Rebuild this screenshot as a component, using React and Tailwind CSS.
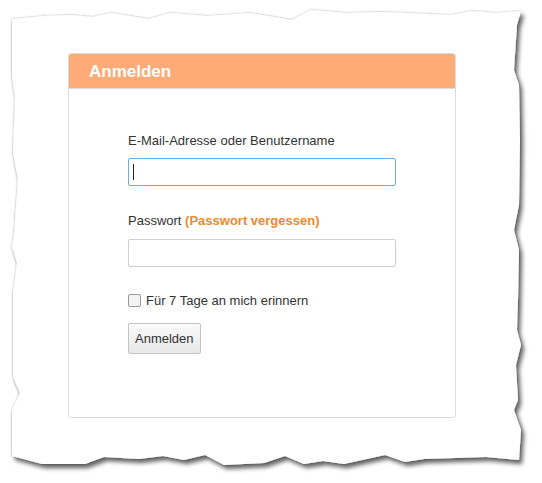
const paperPoints = [
  [12, 19], [45, 16], [73, 15], [92, 17], [111, 13], [149, 19], [170, 13], [208, 16], [250, 13],
  [292, 20], [311, 10], [347, 13], [382, 12], [451, 15], [472, 11], [497, 13], [521, 11],
  [517, 25], [514, 70], [519, 85], [520, 140], [519, 205], [514, 230], [519, 250], [518, 300],
  [517, 330], [521, 345], [516, 365], [518, 400], [514, 410], [521, 430], [519, 460],
  [486, 457], [424, 459], [405, 462], [385, 455], [344, 464], [323, 461], [304, 464], [285, 456],
  [264, 463], [224, 465], [205, 455], [184, 460], [163, 456], [139, 459], [104, 457], [85, 464],
  [42, 464], [12, 456],
  [12, 410], [20, 393], [13, 377], [13, 293], [17, 263], [12, 247], [14, 233], [18, 180],
  [13, 153], [15, 97], [12, 77],
]

function TornPaper() {
  return (
    <svg className="absolute inset-0" width="542" height="483" viewBox="0 0 542 483">
      <defs>
        <filter id="paperShadow" x="-10%" y="-10%" width="120%" height="120%">
          <feDropShadow dx="0" dy="0" stdDeviation="0.8" floodColor="#000" floodOpacity="0.35" />
          <feDropShadow dx="3" dy="4" stdDeviation="2.2" floodColor="#000" floodOpacity="0.6" />
        </filter>
      </defs>
      <polygon
        points={paperPoints.map((p) => p.join(',')).join(' ')}
        fill="#fff"
        filter="url(#paperShadow)"
      />
    </svg>
  )
}

export default function App() {
  return (
    <div
      className="relative w-[542px] h-[483px] bg-white overflow-hidden text-[13px] text-[#333]"
      style={{ fontFamily: '"Liberation Sans", Arial, sans-serif' }}
    >
      <TornPaper />
      <div className="relative pt-[53px] pl-[68px]">
        <div className="w-[388px] h-[365px] border border-[#dcdcdc] rounded-[3px] bg-white overflow-hidden">
          {/* header */}
          <div className="h-[35px] bg-[#ffab78] border-b border-[#dcdcdc] flex items-center px-[20px]">
            <h1 className="text-[17px] font-bold text-white leading-none">Anmelden</h1>
          </div>

          <form className="pl-[59px] pt-[44px] w-[327px]">
            <label className="block leading-[15px]">E-Mail-Adresse oder Benutzername</label>
            <div className="mt-[10px] h-[28px] border border-[#66afe9] rounded-[2px] flex items-center pl-[4px]">
              <span className="w-px h-[16px] bg-[#222]" />
            </div>

            <div className="mt-[27px] leading-[15px]">
              Passwort <span className="font-bold text-[#f5882a]">(Passwort vergessen)</span>
            </div>
            <div className="mt-[11px] h-[28px] border border-[#cfcfcf] rounded-[2px]" />

            <label className="mt-[26px] flex items-center gap-[5px] leading-[15px]">
              <span className="w-[13px] h-[13px] border border-[#999] rounded-[2px] bg-[#f3f3f3]" />
              Für 7 Tage an mich erinnern
            </label>

            <button
              type="button"
              className="mt-[15px] h-[31px] px-[6px] border border-[#c4c4c4] rounded-[2px] bg-gradient-to-b from-[#fafafa] to-[#e8e8e8] text-[13px] text-[#333]"
            >
              Anmelden
            </button>
          </form>
        </div>
      </div>
    </div>
  )
}
